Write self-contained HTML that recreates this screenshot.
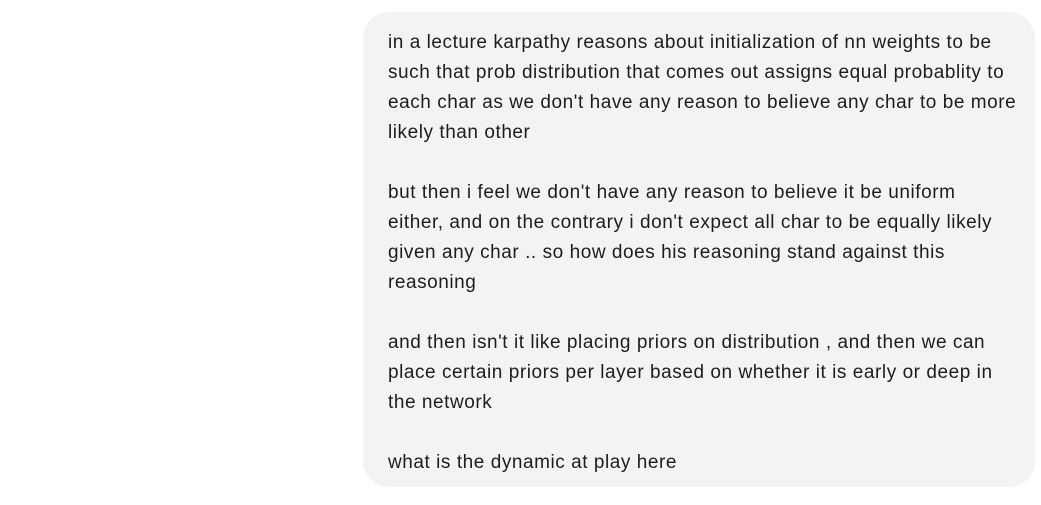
<!DOCTYPE html>
<html><head><meta charset="utf-8"><style>
html,body{margin:0;padding:0;background:#fff;width:1041px;height:505px;overflow:hidden}
.b{position:absolute;left:363px;top:12px;width:672px;height:475px;background:#f3f3f3;border-radius:26px;box-sizing:border-box;padding:16px 0 0 25px}
.t{font-family:"Liberation Sans",sans-serif;font-size:19px;line-height:30px;color:#1d1d1d;white-space:pre;letter-spacing:0.55px}
</style></head><body>
<div class="b"><div class="t">in a lecture karpathy reasons about initialization of nn weights to be
such that prob distribution that comes out assigns equal probablity to
each char as we don't have any reason to believe any char to be more
likely than other

but then i feel we don't have any reason to believe it be uniform
either, and on the contrary i don't expect all char to be equally likely
given any char .. so how does his reasoning stand against this
reasoning

and then isn't it like placing priors on distribution , and then we can
place certain priors per layer based on whether it is early or deep in
the network

what is the dynamic at play here</div></div>
</body></html>
